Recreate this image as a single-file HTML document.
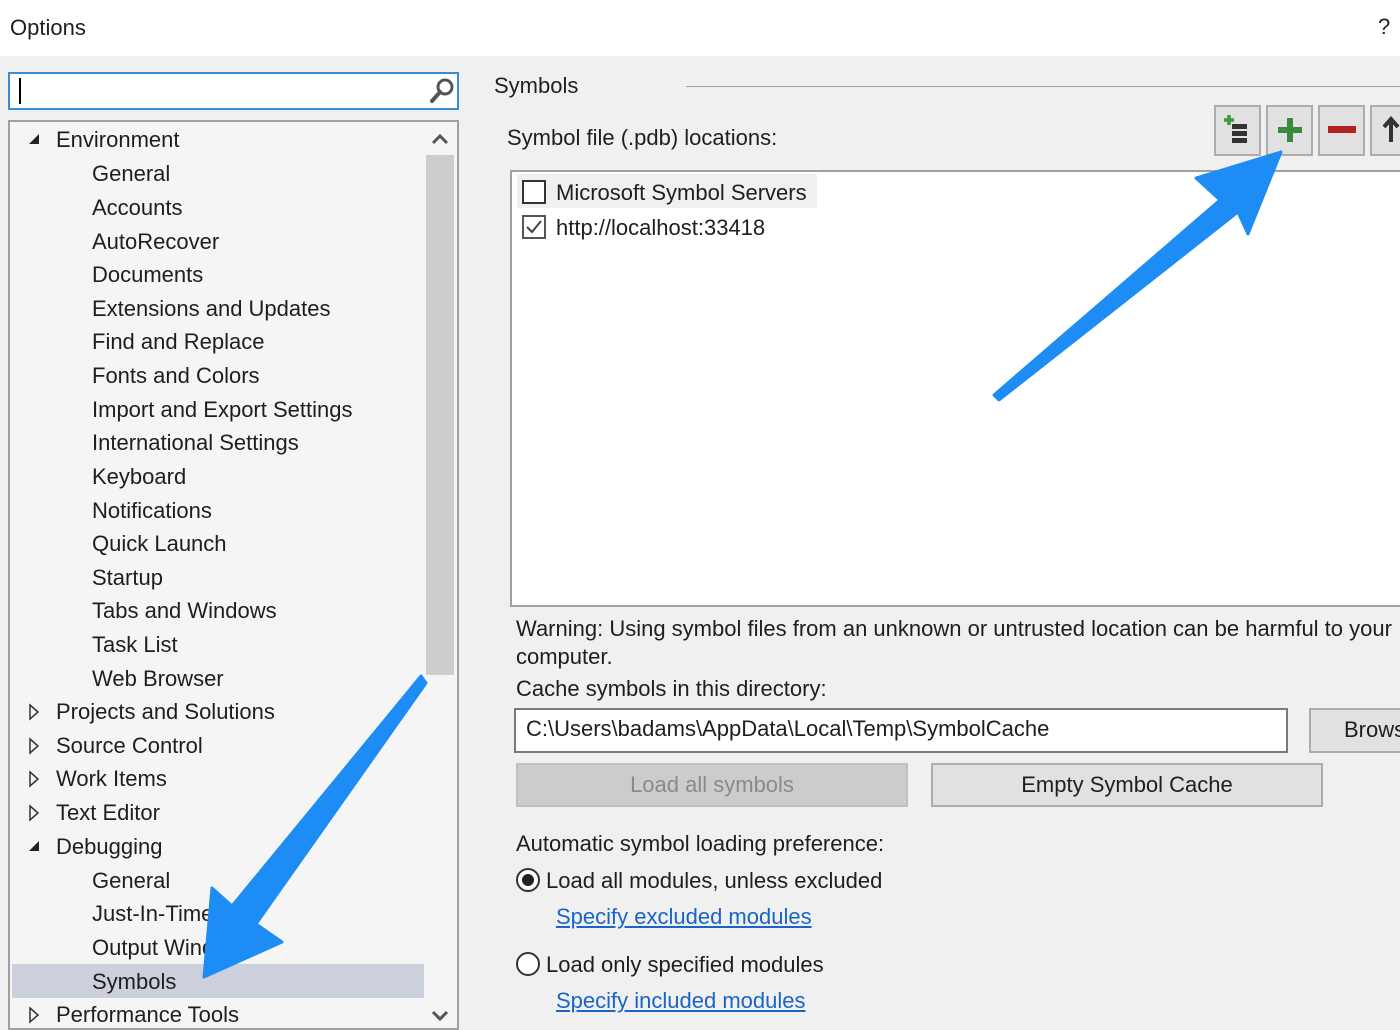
<!DOCTYPE html>
<html><head><meta charset="utf-8"><style>
*{margin:0;padding:0;box-sizing:border-box}
body{width:1400px;height:1024px;overflow:hidden;background:#f0f0f0;font-family:"Liberation Sans",sans-serif;font-size:22px;color:#1e1e1e;position:relative}
.a{position:absolute;white-space:nowrap;line-height:26px}
.btn{position:absolute;border:2px solid #adadad;background:#e1e1e1;text-align:center}
.lnk{color:#1a64c8;text-decoration:underline}
</style></head><body>
<div style="position:absolute;left:0;top:0;width:1400px;height:56px;background:#fff"></div>
<div class="a" style="left:10px;top:15px">Options</div>
<div class="a" style="left:1378px;top:14px">?</div>

<div style="position:absolute;left:8px;top:72px;width:451px;height:38px;border:2px solid #3c8ad2;background:#fff"></div>
<div style="position:absolute;left:19px;top:78px;width:2px;height:26px;background:#000"></div>
<svg style="position:absolute;left:428px;top:76px" width="28" height="28"><circle cx="17" cy="11" r="7" fill="none" stroke="#555" stroke-width="3"/><line x1="12" y1="16" x2="4" y2="25" stroke="#555" stroke-width="4" stroke-linecap="round"/></svg>

<div style="position:absolute;left:8px;top:120px;width:451px;height:910px;border:2px solid #a0a0a0;background:#f5f5f5"></div>
<div style="position:absolute;left:426px;top:155px;width:28px;height:520px;background:#cdcdcd"></div>
<svg style="position:absolute;left:430px;top:130px" width="20" height="18"><path d="M3 13 L10 6 L17 13" fill="none" stroke="#555" stroke-width="3"/></svg>
<svg style="position:absolute;left:430px;top:1008px" width="20" height="16"><path d="M3 4 L10 11 L17 4" fill="none" stroke="#555" stroke-width="3"/></svg>
<div style="position:absolute;left:12px;top:964px;width:412px;height:34px;background:#ccd0dd"></div>
<div class="tree">
<svg style="position:absolute;left:28px;top:133px" width="12" height="12"><path d="M11 1 L11 11 L1 11Z" fill="#222"/></svg>
<div class="a" style="left:56px;top:127px">Environment</div>
<div class="a" style="left:92px;top:161px">General</div>
<div class="a" style="left:92px;top:195px">Accounts</div>
<div class="a" style="left:92px;top:229px">AutoRecover</div>
<div class="a" style="left:92px;top:262px">Documents</div>
<div class="a" style="left:92px;top:296px">Extensions and Updates</div>
<div class="a" style="left:92px;top:329px">Find and Replace</div>
<div class="a" style="left:92px;top:363px">Fonts and Colors</div>
<div class="a" style="left:92px;top:397px">Import and Export Settings</div>
<div class="a" style="left:92px;top:430px">International Settings</div>
<div class="a" style="left:92px;top:464px">Keyboard</div>
<div class="a" style="left:92px;top:498px">Notifications</div>
<div class="a" style="left:92px;top:531px">Quick Launch</div>
<div class="a" style="left:92px;top:565px">Startup</div>
<div class="a" style="left:92px;top:598px">Tabs and Windows</div>
<div class="a" style="left:92px;top:632px">Task List</div>
<div class="a" style="left:92px;top:666px">Web Browser</div>
<svg style="position:absolute;left:28px;top:703px" width="12" height="18"><path d="M2 2 L10 9 L2 16Z" fill="none" stroke="#333" stroke-width="1.5"/></svg>
<div class="a" style="left:56px;top:699px">Projects and Solutions</div>
<svg style="position:absolute;left:28px;top:737px" width="12" height="18"><path d="M2 2 L10 9 L2 16Z" fill="none" stroke="#333" stroke-width="1.5"/></svg>
<div class="a" style="left:56px;top:733px">Source Control</div>
<svg style="position:absolute;left:28px;top:770px" width="12" height="18"><path d="M2 2 L10 9 L2 16Z" fill="none" stroke="#333" stroke-width="1.5"/></svg>
<div class="a" style="left:56px;top:766px">Work Items</div>
<svg style="position:absolute;left:28px;top:804px" width="12" height="18"><path d="M2 2 L10 9 L2 16Z" fill="none" stroke="#333" stroke-width="1.5"/></svg>
<div class="a" style="left:56px;top:800px">Text Editor</div>
<svg style="position:absolute;left:28px;top:840px" width="12" height="12"><path d="M11 1 L11 11 L1 11Z" fill="#222"/></svg>
<div class="a" style="left:56px;top:834px">Debugging</div>
<div class="a" style="left:92px;top:868px">General</div>
<div class="a" style="left:92px;top:901px">Just-In-Time</div>
<div class="a" style="left:92px;top:935px">Output Window</div>
<div class="a" style="left:92px;top:969px">Symbols</div>
<svg style="position:absolute;left:28px;top:1006px" width="12" height="18"><path d="M2 2 L10 9 L2 16Z" fill="none" stroke="#333" stroke-width="1.5"/></svg>
<div class="a" style="left:56px;top:1002px">Performance Tools</div>
</div>

<div class="a" style="left:494px;top:73px">Symbols</div>
<div style="position:absolute;left:686px;top:86px;width:714px;height:1px;background:#a0a0a0"></div>
<div class="a" style="left:507px;top:125px">Symbol file (.pdb) locations:</div>
<div class="btn" style="left:1214px;top:105px;width:47px;height:51px"></div>
<div class="btn" style="left:1266px;top:105px;width:47px;height:51px"></div>
<div class="btn" style="left:1318px;top:105px;width:47px;height:51px"></div>
<div class="btn" style="left:1370px;top:105px;width:47px;height:51px"></div>
<svg style="position:absolute;left:1222px;top:114px" width="32" height="32"><path d="M2 6h10M7 1v10" stroke="#3a9a3a" stroke-width="3.5"/><rect x="10" y="10" width="15" height="5" fill="#333"/><rect x="10" y="17" width="15" height="5" fill="#333"/><rect x="10" y="24" width="15" height="5" fill="#333"/></svg>
<svg style="position:absolute;left:1276px;top:116px" width="28" height="28"><path d="M14 2v24M2 14h24" stroke="#3a8a3a" stroke-width="6"/></svg>
<svg style="position:absolute;left:1328px;top:124px" width="28" height="12"><rect x="0" y="2" width="28" height="7" fill="#b22222"/></svg>
<svg style="position:absolute;left:1382px;top:116px" width="18" height="28"><path d="M9 26V4M2 11L9 3L16 11" stroke="#333" stroke-width="4" fill="none"/></svg>

<div style="position:absolute;left:510px;top:170px;width:900px;height:437px;border:2px solid #a0a0a0;background:#fff"></div>
<div style="position:absolute;left:517px;top:174px;width:300px;height:34px;background:#f0f0f0"></div>
<div style="position:absolute;left:522px;top:180px;width:24px;height:24px;border:2px solid #333;background:#fff"></div>
<div class="a" style="left:556px;top:180px">Microsoft Symbol Servers</div>
<div style="position:absolute;left:522px;top:215px;width:24px;height:24px;border:2px solid #555;background:#fff"></div>
<svg style="position:absolute;left:524px;top:217px" width="20" height="20"><path d="M3 10 L8 15 L17 4" fill="none" stroke="#444" stroke-width="2"/></svg>
<div class="a" style="left:556px;top:215px">http://localhost:33418</div>

<div class="a" style="left:516px;top:616px">Warning: Using symbol files from an unknown or untrusted location can be harmful to your</div>
<div class="a" style="left:516px;top:644px">computer.</div>
<div class="a" style="left:516px;top:676px">Cache symbols in this directory:</div>
<div style="position:absolute;left:514px;top:708px;width:774px;height:45px;border:2px solid #7a7a7a;background:#fff"></div>
<div class="a" style="left:526px;top:716px">C:\Users\badams\AppData\Local\Temp\SymbolCache</div>
<div class="btn" style="left:1309px;top:708px;width:110px;height:45px;line-height:40px;text-align:left;padding-left:33px">Browse</div>
<div class="btn" style="left:516px;top:763px;width:392px;height:44px;background:#cccccc;border-color:#bfbfbf;color:#8a8a8a;line-height:40px">Load all symbols</div>
<div class="btn" style="left:931px;top:763px;width:392px;height:44px;line-height:40px">Empty Symbol Cache</div>
<div class="a" style="left:516px;top:831px">Automatic symbol loading preference:</div>
<svg style="position:absolute;left:515px;top:867px" width="26" height="26"><circle cx="13" cy="13" r="11" fill="#fff" stroke="#333" stroke-width="2"/><circle cx="13" cy="13" r="6" fill="#222"/></svg>
<div class="a" style="left:546px;top:868px">Load all modules, unless excluded</div>
<div class="a lnk" style="left:556px;top:904px">Specify excluded modules</div>
<svg style="position:absolute;left:515px;top:951px" width="26" height="26"><circle cx="13" cy="13" r="11" fill="#fff" stroke="#333" stroke-width="2"/></svg>
<div class="a" style="left:546px;top:952px">Load only specified modules</div>
<div class="a lnk" style="left:556px;top:988px">Specify included modules</div>

<svg style="position:absolute;left:0;top:0" width="1400" height="1024">
<path d="M994 395 L1220 200 L1196 178 L1281 152 L1248 234 L1238 212 L999 400 Z" fill="#1e8cf5" stroke="#1e8cf5" stroke-width="3" stroke-linejoin="round"/>
<path d="M421 676 L232 906 L212 888 L204 977 L282 942 L256 924 L426 683 Z" fill="#1e8cf5" stroke="#1e8cf5" stroke-width="3" stroke-linejoin="round"/>
</svg>
</body></html>
